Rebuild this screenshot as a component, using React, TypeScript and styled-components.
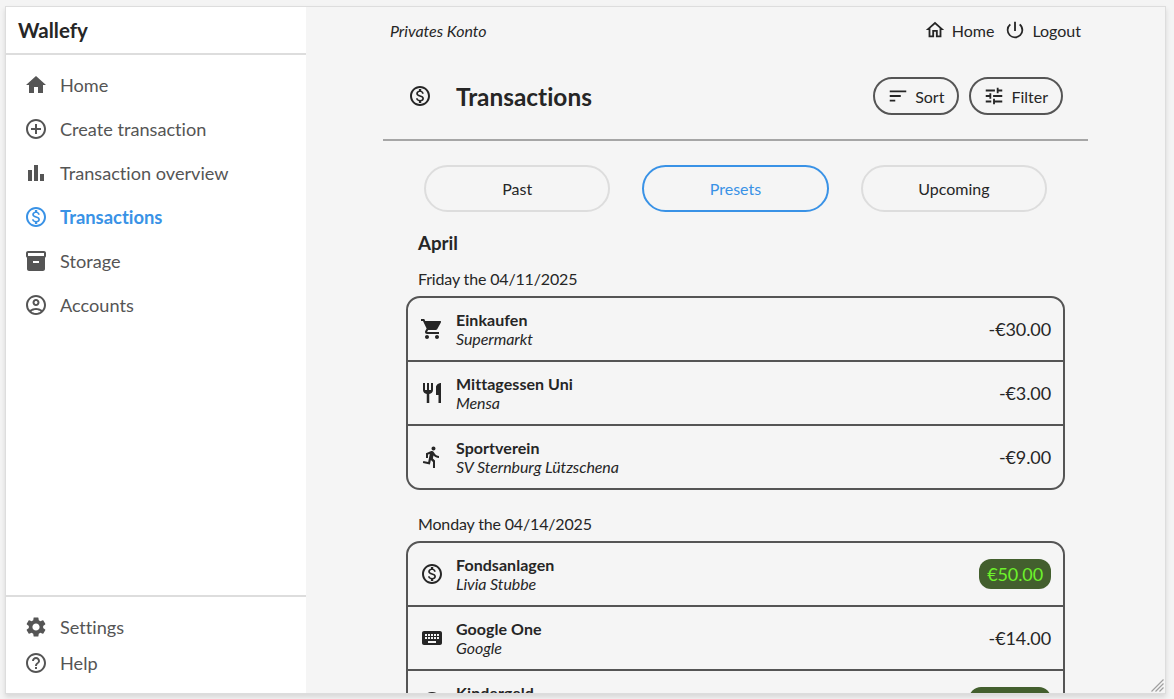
import React from 'react';
import styled, { createGlobalStyle } from 'styled-components';
import type { IconType } from 'react-icons';
import {
  MdHome, MdControlPoint, MdBarChart, MdOutlineMonetizationOn, MdInventory2, MdOutlineAccountCircle,
  MdSettings, MdHelpOutline, MdOutlineHome, MdPowerSettingsNew, MdSort, MdTune, MdShoppingCart,
  MdRestaurant, MdDirectionsRun, MdKeyboard,
} from 'react-icons/md';

const GlobalStyle = createGlobalStyle`
  * { box-sizing: border-box; }
  body {
    margin: 0;
    background: #f4f4f4;
    color: #262626;
    font: 16px/19px Lato, sans-serif;
    font-variant-ligatures: none;
    overflow: hidden;
  }
  svg { display: block; flex: none; }
`;

const Page = styled.div`
  height: 699px;
  padding: 6px 8px 5px 5px;
`;

const Frame = styled.div`
  position: relative;
  display: flex;
  height: 688px;
  border: 1px solid #dddddd;
  box-shadow: 0 3px 5px rgba(0, 0, 0, 0.12);
  background: #f5f5f5;
  overflow: hidden;
`;

const Sidebar = styled.aside`
  display: flex;
  flex-direction: column;
  width: 300px;
  flex: none;
  background: #fff;
`;

const Brand = styled.div`
  height: 48px;
  padding: 0 12px;
  border-bottom: 2px solid #dddddd;
  font-size: 20.5px;
  font-weight: 700;
  line-height: 46px;
`;

const Nav = styled.nav`
  flex: 1;
  padding-top: 8px;
`;

const NavBottom = styled.nav`
  height: 98px;
  padding-top: 12px;
  border-top: 2px solid #dddddd;
`;

const NavItem = styled.a<{ $active?: boolean; $compact?: boolean }>`
  display: flex;
  align-items: center;
  gap: 12px;
  height: ${(p) => (p.$compact ? 36 : 44)}px;
  padding-left: 18px;
  color: ${(p) => (p.$active ? '#3992e6' : '#555555')};
  font-size: ${(p) => (p.$active ? 18.4 : 18.15)}px;
  font-weight: ${(p) => (p.$active ? 700 : 400)};
  line-height: 24px;
`;

const Main = styled.main`
  flex: 1;
  padding: 0 77px;
  min-width: 0;
`;

const TopBar = styled.header`
  display: flex;
  align-items: center;
  justify-content: space-between;
  height: 48px;
  padding: 0 7px 2px;
`;

const AccountName = styled.span`
  font-style: italic;
`;

const TopLinks = styled.div`
  display: flex;
  gap: 10px;
`;

const TopLink = styled.a`
  display: flex;
  align-items: center;
  gap: 6px;
`;

const TitleBar = styled.div`
  display: flex;
  align-items: center;
  height: 86px;
  padding: 0 25px 2px;
  border-bottom: 2px solid #a6a6a6;
`;

const Title = styled.h1`
  flex: 1;
  margin: 2px 0 0 24px;
  font-size: 24.4px;
  line-height: 32px;
`;

const Action = styled.button`
  display: flex;
  align-items: center;
  gap: 6px;
  height: 38px;
  margin-left: 10px;
  padding: 0 13px 0 12px;
  border: 2px solid #555555;
  border-radius: 19px;
  background: none;
  color: inherit;
  font: inherit;
  font-variant-ligatures: none;
`;

const Tabs = styled.div`
  display: grid;
  grid-template-columns: repeat(3, 1fr);
  gap: 32px;
  padding: 24px 41px 0;
`;

const Tab = styled.button<{ $active?: boolean }>`
  height: 47px;
  padding: 0 0 1px;
  border: 2px solid ${(p) => (p.$active ? '#3992e6' : '#dddddd')};
  border-radius: 24px;
  background: none;
  color: ${(p) => (p.$active ? '#3992e6' : 'inherit')};
  font: inherit;
`;

const Month = styled.h2`
  margin: 19px 35px 0;
  font-size: 18.72px;
  line-height: 24px;
`;

const DateLabel = styled.p<{ $first?: boolean }>`
  margin: ${(p) => (p.$first ? 14 : 24)}px 35px 8px;
  letter-spacing: -0.16px;
`;

const Card = styled.ul`
  list-style: none;
  margin: 0 23px;
  padding: 0;
  border: 2px solid #555555;
  border-radius: 14px;
`;

const Row = styled.li`
  display: flex;
  align-items: center;
  height: 64px;
  padding: 0 12px;
  border-bottom: 2px solid #555555;

  &:last-child { height: 62px; border-bottom: 0; }
`;

const Info = styled.div`
  flex: 1;
  margin-left: 12px;
  font-style: italic;
  letter-spacing: -0.07px;
`;

const Name = styled.strong`
  display: block;
  font-style: normal;
  letter-spacing: 0.05px;
`;

const Amount = styled.span<{ $income?: boolean }>`
  padding: ${(p) => (p.$income ? '3px 8px' : '0')};
  border-radius: 12px;
  background: ${(p) => (p.$income ? '#435f2e' : 'none')};
  color: ${(p) => (p.$income ? '#6df22b' : 'inherit')};
  font-size: 18px;
  letter-spacing: -0.1px;
  line-height: 24px;
`;

const ResizeGrip = styled.svg`
  position: absolute;
  right: 1px;
  bottom: 1px;
`;

interface Transaction { icon: IconType; name: string; place: string; amount: string; income?: boolean }

const groups: { date: string; items: Transaction[] }[] = [
  {
    date: 'Friday the 04/11/2025',
    items: [
      { icon: MdShoppingCart, name: 'Einkaufen', place: 'Supermarkt', amount: '-€30.00' },
      { icon: MdRestaurant, name: 'Mittagessen Uni', place: 'Mensa', amount: '-€3.00' },
      { icon: MdDirectionsRun, name: 'Sportverein', place: 'SV Sternburg Lützschena', amount: '-€9.00' },
    ],
  },
  {
    date: 'Monday the 04/14/2025',
    items: [
      { icon: MdOutlineMonetizationOn, name: 'Fondsanlagen', place: 'Livia Stubbe', amount: '€50.00', income: true },
      { icon: MdKeyboard, name: 'Google One', place: 'Google', amount: '-€14.00' },
      { icon: MdOutlineMonetizationOn, name: 'Kindergeld', place: 'Familienkasse', amount: '€250.00', income: true },
    ],
  },
];

const navigation: { icon: IconType; label: string; active?: boolean }[] = [
  { icon: MdHome, label: 'Home' },
  { icon: MdControlPoint, label: 'Create transaction' },
  { icon: MdBarChart, label: 'Transaction overview' },
  { icon: MdOutlineMonetizationOn, label: 'Transactions', active: true },
  { icon: MdInventory2, label: 'Storage' },
  { icon: MdOutlineAccountCircle, label: 'Accounts' },
];

export default function App() {
  return (
    <Page>
      <GlobalStyle />
      <Frame>
        <Sidebar>
          <Brand>Wallefy</Brand>
          <Nav>
            {navigation.map(({ icon: Icon, label, active }) => (
              <NavItem key={label} $active={active}><Icon size={24} />{label}</NavItem>
            ))}
          </Nav>
          <NavBottom>
            <NavItem $compact><MdSettings size={24} />Settings</NavItem>
            <NavItem $compact><MdHelpOutline size={24} />Help</NavItem>
          </NavBottom>
        </Sidebar>
        <Main>
          <TopBar>
            <AccountName>Privates Konto</AccountName>
            <TopLinks>
              <TopLink><MdOutlineHome size={22} />Home</TopLink>
              <TopLink><MdPowerSettingsNew size={22} />Logout</TopLink>
            </TopLinks>
          </TopBar>
          <TitleBar>
            <MdOutlineMonetizationOn size={24} />
            <Title>Transactions</Title>
            <Action><MdSort size={22} /><span>Sort</span></Action>
            <Action><MdTune size={22} /><span>Filter</span></Action>
          </TitleBar>
          <Tabs>
            <Tab>Past</Tab>
            <Tab $active>Presets</Tab>
            <Tab>Upcoming</Tab>
          </Tabs>
          <Month>April</Month>
          {groups.map((group, index) => (
            <section key={group.date}>
              <DateLabel $first={index === 0}>{group.date}</DateLabel>
              <Card>
                {group.items.map(({ icon: Icon, name, place, amount, income }) => (
                  <Row key={name}>
                    <Icon size={24} />
                    <Info><Name>{name}</Name>{place}</Info>
                    <Amount $income={income}>{amount}</Amount>
                  </Row>
                ))}
              </Card>
            </section>
          ))}
        </Main>
        <ResizeGrip width="13" height="13" viewBox="0 0 13 13" stroke="#a0a0a0" strokeWidth="1.2">
          <path d="M0.5 12.5l12-12M4.5 12.5l8-8M8.5 12.5l4-4" />
        </ResizeGrip>
      </Frame>
    </Page>
  );
}
